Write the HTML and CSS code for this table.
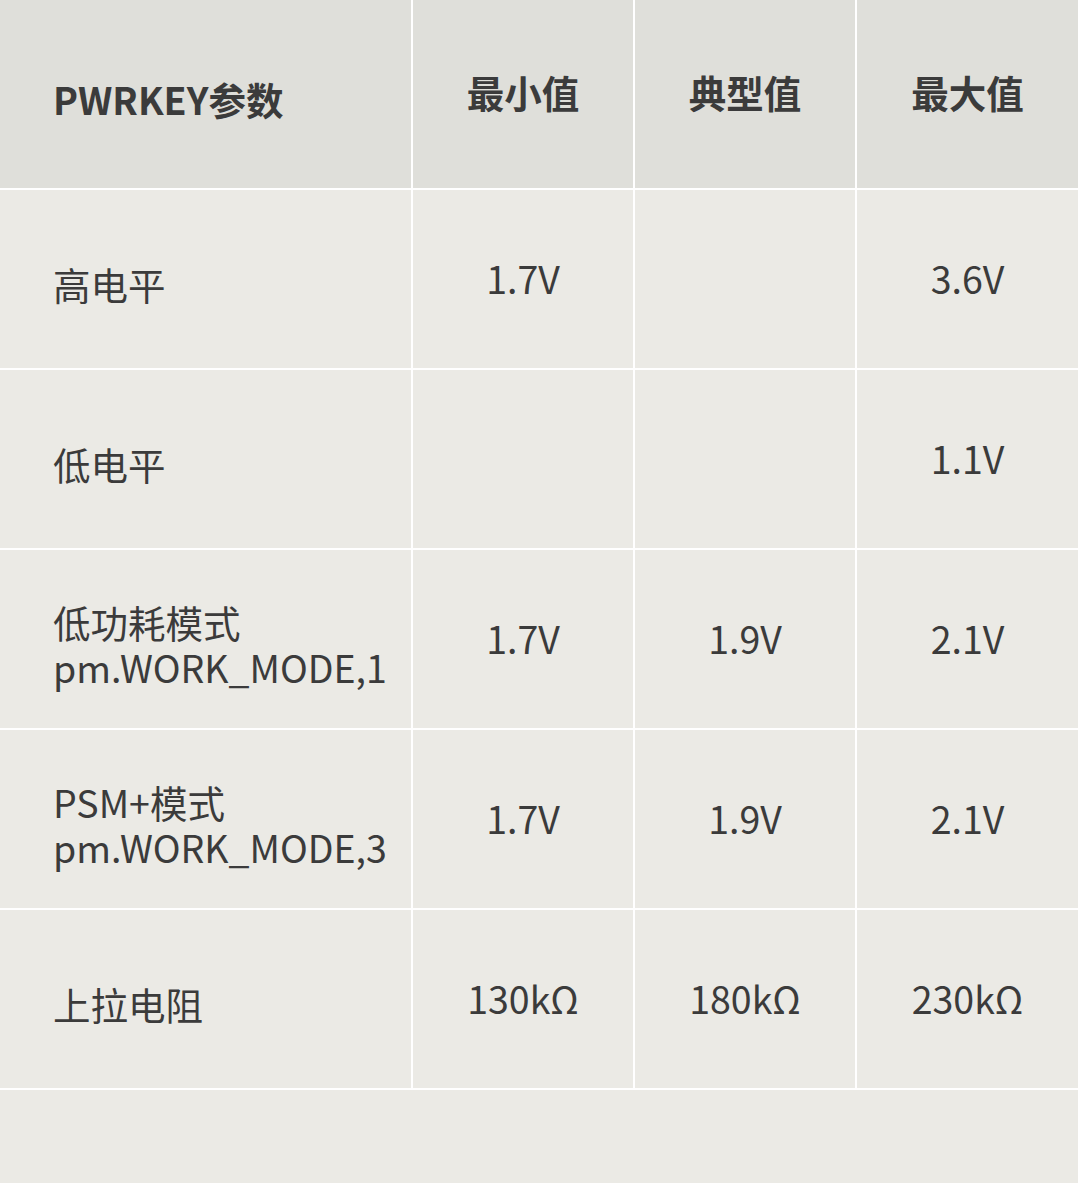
FILE: index.html
```html
<!DOCTYPE html>
<html lang="zh">
<head>
<meta charset="utf-8">
<title>PWRKEY参数</title>
<link rel="stylesheet" href="styles.css">
</head>
<body>
<div class="table">
  <div class="cell head first">PWRKEY参数</div>
  <div class="cell head">最小值</div>
  <div class="cell head">典型值</div>
  <div class="cell head">最大值</div>

  <div class="cell first">高电平</div>
  <div class="cell">1.7V</div>
  <div class="cell"></div>
  <div class="cell">3.6V</div>

  <div class="cell first">低电平</div>
  <div class="cell"></div>
  <div class="cell"></div>
  <div class="cell">1.1V</div>

  <div class="cell first">低功耗模式<br>pm.WORK_MODE,1</div>
  <div class="cell">1.7V</div>
  <div class="cell">1.9V</div>
  <div class="cell">2.1V</div>

  <div class="cell first">PSM+模式<br>pm.WORK_MODE,3</div>
  <div class="cell">1.7V</div>
  <div class="cell">1.9V</div>
  <div class="cell">2.1V</div>

  <div class="cell first">上拉电阻</div>
  <div class="cell">130kΩ</div>
  <div class="cell">180kΩ</div>
  <div class="cell">230kΩ</div>

  <div class="footer"></div>
</div>
</body>
</html>
```

FILE: styles.css
```css
html, body {
  margin: 0;
  padding: 0;
  background: #ebeae5;
}
body {
  width: 1080px;
  height: 1183px;
  overflow: hidden;
  font-family: "Noto Sans CJK SC", "Noto Sans", sans-serif;
  color: #3b3b3b;
}
.table {
  display: grid;
  grid-template-columns: 411px 220px 220px 221px;
  grid-template-rows: 188px repeat(5, 178px) 93px;
  gap: 2px;
  padding-right: 2px;
  background: #ffffff;
  width: 1078px;
}
.cell {
  background: #ebeae5;
  display: flex;
  align-items: center;
  justify-content: center;
  text-align: center;
  font-size: 37.5px;
  line-height: 45px;
  padding-bottom: 4px;
  box-sizing: border-box;
}
.cell.first {
  justify-content: flex-start;
  text-align: left;
  padding-left: 53px;
  padding-top: 9px;
  padding-bottom: 0;
}
.head {
  background: #dfdfda;
  font-weight: 700;
  padding-bottom: 6px;
}
.head.first {
  padding-top: 8px;
  padding-bottom: 0;
}
.footer {
  grid-column: 1 / -1;
  background: #ebeae5;
}
```
